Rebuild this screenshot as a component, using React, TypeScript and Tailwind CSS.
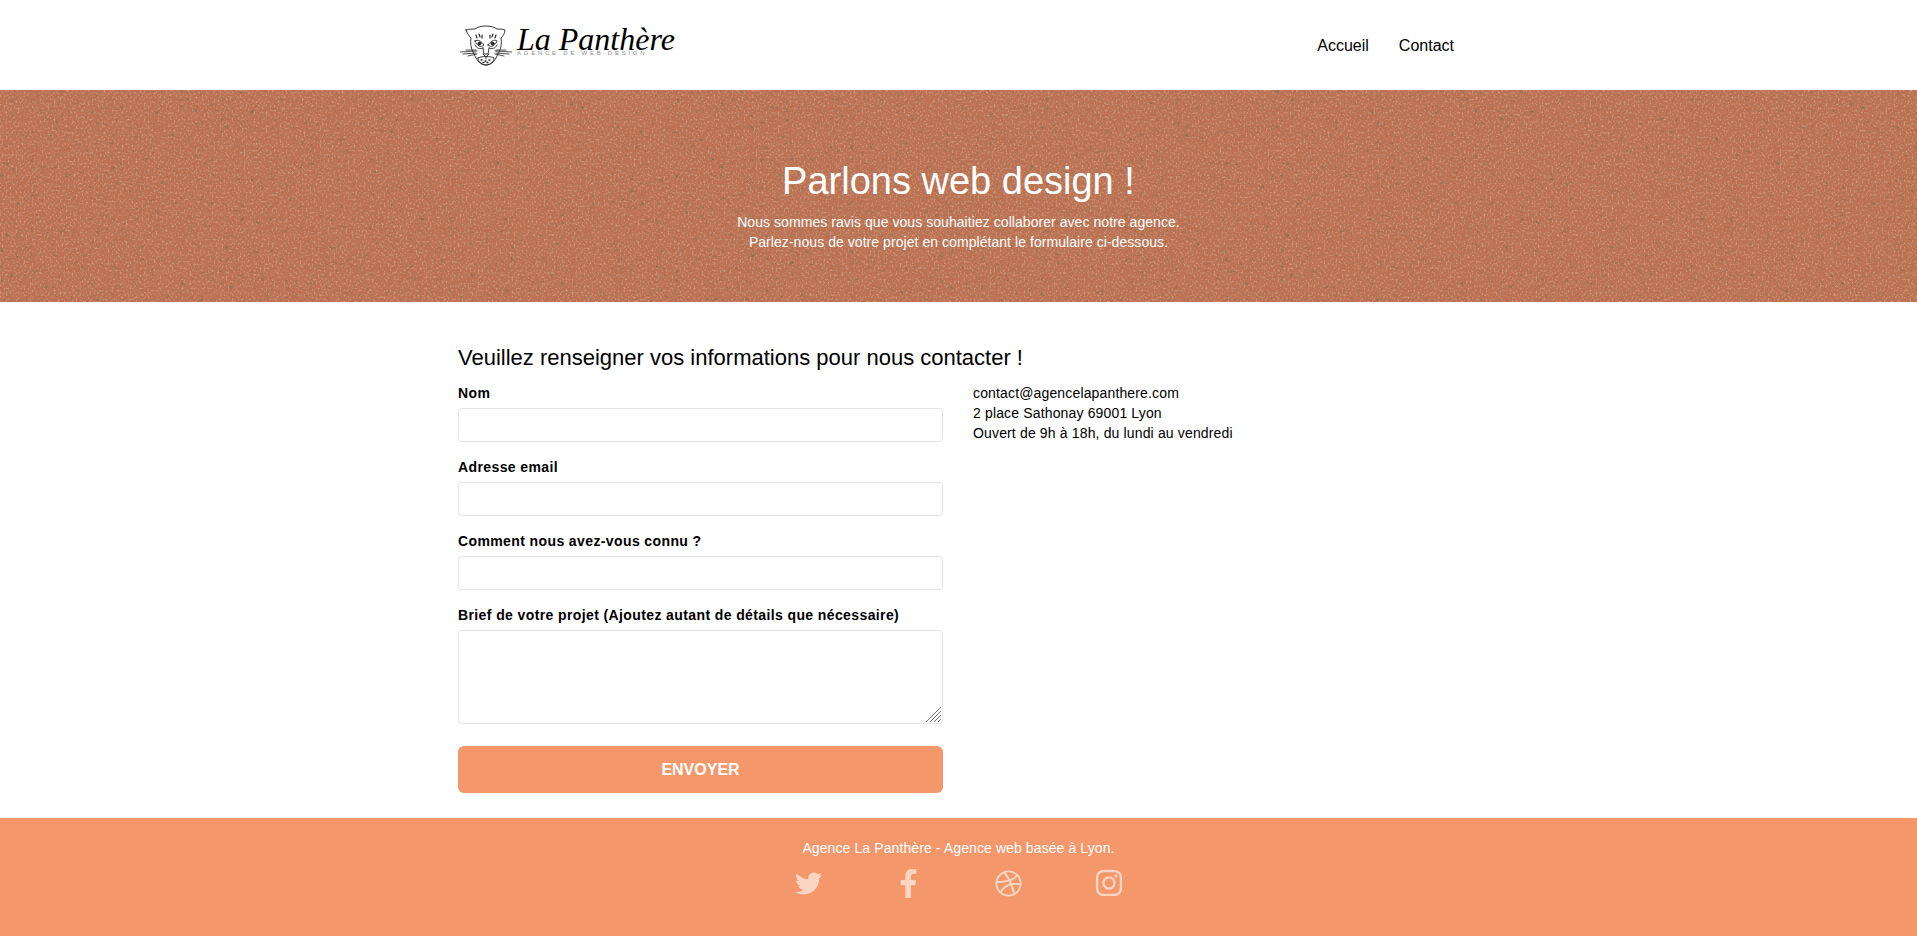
import { FaTwitter, FaFacebookF, FaDribbble, FaInstagram } from 'react-icons/fa';

function PantherLogo() {
  return (
    <svg width="52" height="42" viewBox="0 0 52 42" fill="none" stroke="#222" strokeWidth="0.9" strokeLinejoin="round" strokeLinecap="round">
      {/* head */}
      <path d="M6 6 C10 5 12 5 15 5 C20 1 32 1 37 5 C40 5 42 5 45 6 C45 9 43 12 41 14 C42 19 41 24 39 28 L36 34 C34 38 30 41 26 41 C22 41 18 38 16 34 L13 28 C11 24 10 19 11 14 C9 12 7 9 6 6 Z" />
      {/* eyes */}
      <path d="M15 17 C18 15 21 17 24 21 C21 24 17 22 15 17 Z" />
      <path d="M28 21 C31 17 34 15 37 17 C35 22 31 24 28 21 Z" />
      <circle cx="19.5" cy="19.5" r="1.5" fill="#222" />
      <circle cx="32.5" cy="19.5" r="1.5" fill="#222" />
      <path d="M15 21 C17 25 20 25 23 24 M37 21 C35 25 32 25 29 24" />
      {/* brow marks */}
      <path d="M19 10 L20 13 M16 11 L17 14 M22 11 L22 14 M33 10 L32 13 M36 11 L35 14 M30 11 L30 14" strokeWidth="1.2" />
      {/* nose and muzzle */}
      <path d="M23 24 L24 30 L28 30 L29 24" />
      <path d="M23 30 L26 33 L29 30 M26 33 L26 35" />
      <path d="M18 34 C21 32 31 32 34 34 C34 38 30 41 26 41 C22 41 18 38 18 34 Z" />
      <path d="M21 36 h1 M25 37 h1 M29 36 h1 M23 38.5 h1 M27 38.5 h1" strokeWidth="1.3" />
      {/* whiskers */}
      <path d="M0 28 L17 27 M3 30 L16 29 M6 26 L16 26 M8 32 L17 30 M52 28 L35 27 M49 30 L36 29 M46 26 L36 26 M44 32 L35 30" strokeWidth="0.8" />
    </svg>
  );
}

function Field({ label }: { label: string }) {
  return (
    <div className="mb-[12px]">
      <label className="block h-[28px] text-[14px] leading-[26px] font-bold tracking-[0.39px]">{label}</label>
      <input type="text" className="block w-full h-[34px] rounded-[4px] border border-[#e4e4e4] bg-white" />
    </div>
  );
}

export default function App() {
  return (
    <div className="min-h-[945px] bg-white text-black font-['Liberation_Sans',Arial,sans-serif]">
      <nav className="h-[90px]">
        <div className="w-[1000px] h-full ml-[458px] flex items-center justify-between">
          <div className="flex items-center pl-[2px]">
            <PantherLogo />
            <div className="ml-[5px] h-[42px] w-[170px] pt-[4px]">
              <div className="font-['Liberation_Serif',serif] italic text-[32px] leading-[23px] whitespace-nowrap">La Panthère</div>
              <div className="text-[6px] leading-[5px] tracking-[2.75px] text-[#888] whitespace-nowrap">AGENCE DE WEB DESIGN</div>
            </div>
          </div>
          <div className="flex gap-[30px] pr-1 pt-[1px] text-[16px]">
            <a>Accueil</a>
            <a>Contact</a>
          </div>
        </div>
      </nav>

      <header className="relative h-[212px] bg-[#bc7151] overflow-hidden text-white text-center">
        {/* paper grain */}
        <svg className="absolute inset-0 w-full h-full" xmlns="http://www.w3.org/2000/svg">
          <filter id="grainDark">
            <feTurbulence type="fractalNoise" baseFrequency="0.4 0.35" numOctaves="3" seed="4" />
            <feColorMatrix values="0 0 0 0 0.42  0 0 0 0 0.2  0 0 0 0 0.12  2 0 0 0 -0.92" />
          </filter>
          <filter id="grainLight">
            <feTurbulence type="fractalNoise" baseFrequency="0.5 0.45" numOctaves="2" seed="12" />
            <feColorMatrix values="0 0 0 0 0.82  0 0 0 0 0.5  0 0 0 0 0.37  0 1.6 0 0 -0.8" />
          </filter>
          <filter id="grainSpecks">
            <feTurbulence type="fractalNoise" baseFrequency="0.2 0.25" numOctaves="3" seed="21" />
            <feColorMatrix values="0 0 0 0 0.3  0 0 0 0 0.15  0 0 0 0 0.08  5 0 0 0 -3.3" />
          </filter>
          <rect width="100%" height="100%" filter="url(#grainDark)" />
          <rect width="100%" height="100%" filter="url(#grainLight)" />
          <rect width="100%" height="100%" filter="url(#grainSpecks)" />
        </svg>
        <div className="relative pt-[67px]">
          <h1 className="text-[38px] leading-[48px] font-normal">Parlons web design !</h1>
          <p className="mt-[7px] text-[14px] leading-[20px] tracking-[0.055px]">
            Nous sommes ravis que vous souhaitiez collaborer avec notre agence.
            <br />
            Parlez-nous de votre projet en complétant le formulaire ci-dessous.
          </p>
        </div>
      </header>

      <main className="w-[1000px] ml-[458px] h-[516px] pt-[41px]">
        <h2 className="text-[22px] leading-[30px] font-normal">Veuillez renseigner vos informations pour nous contacter !</h2>
        <div className="mt-[7px] grid grid-cols-2 gap-[30px]">
          <form>
            <Field label="Nom" />
            <Field label="Adresse email" />
            <Field label="Comment nous avez-vous connu ?" />
            <label className="block h-[28px] text-[14px] leading-[26px] font-bold tracking-[0.39px]">Brief de votre projet (Ajoutez autant de détails que nécessaire)</label>
            <div className="relative">
              <textarea className="block w-full h-[94px] rounded-[4px] border border-[#e4e4e4] bg-white resize-none" />
              {/* resize grip */}
              <svg className="absolute right-[2px] bottom-[2px]" width="15" height="15" viewBox="0 0 15 15" stroke="#777" strokeWidth="1">
                <path d="M0 15 L15 0 M4 15 L15 4 M8 15 L15 8 M12 15 L15 12" />
              </svg>
            </div>
            <button type="button" className="mt-[22px] block w-full h-[47px] rounded-[6px] bg-[#f4976b] text-white text-[16px] font-bold">ENVOYER</button>
          </form>
          <div className="pt-[3px] text-[14px] leading-[20px] tracking-[0.15px]">
            contact@agencelapanthere.com
            <br />
            2 place Sathonay 69001 Lyon
            <br />
            Ouvert de 9h à 18h, du lundi au vendredi
          </div>
        </div>
      </main>

      <footer className="h-[118px] bg-[#f4976b] text-white text-center pt-[20px]">
        <p className="text-[14px] leading-[20px] tracking-[0.1px]">Agence La Panthère - Agence web basée à Lyon.</p>
        <div className="mt-[10px] mx-auto w-[400px] h-[30px] grid grid-cols-4 items-center justify-items-center text-white/60">
          <FaTwitter size={27} />
          <FaFacebookF size={29} />
          <FaDribbble size={27} />
          <FaInstagram size={30} />
        </div>
      </footer>
    </div>
  );
}
